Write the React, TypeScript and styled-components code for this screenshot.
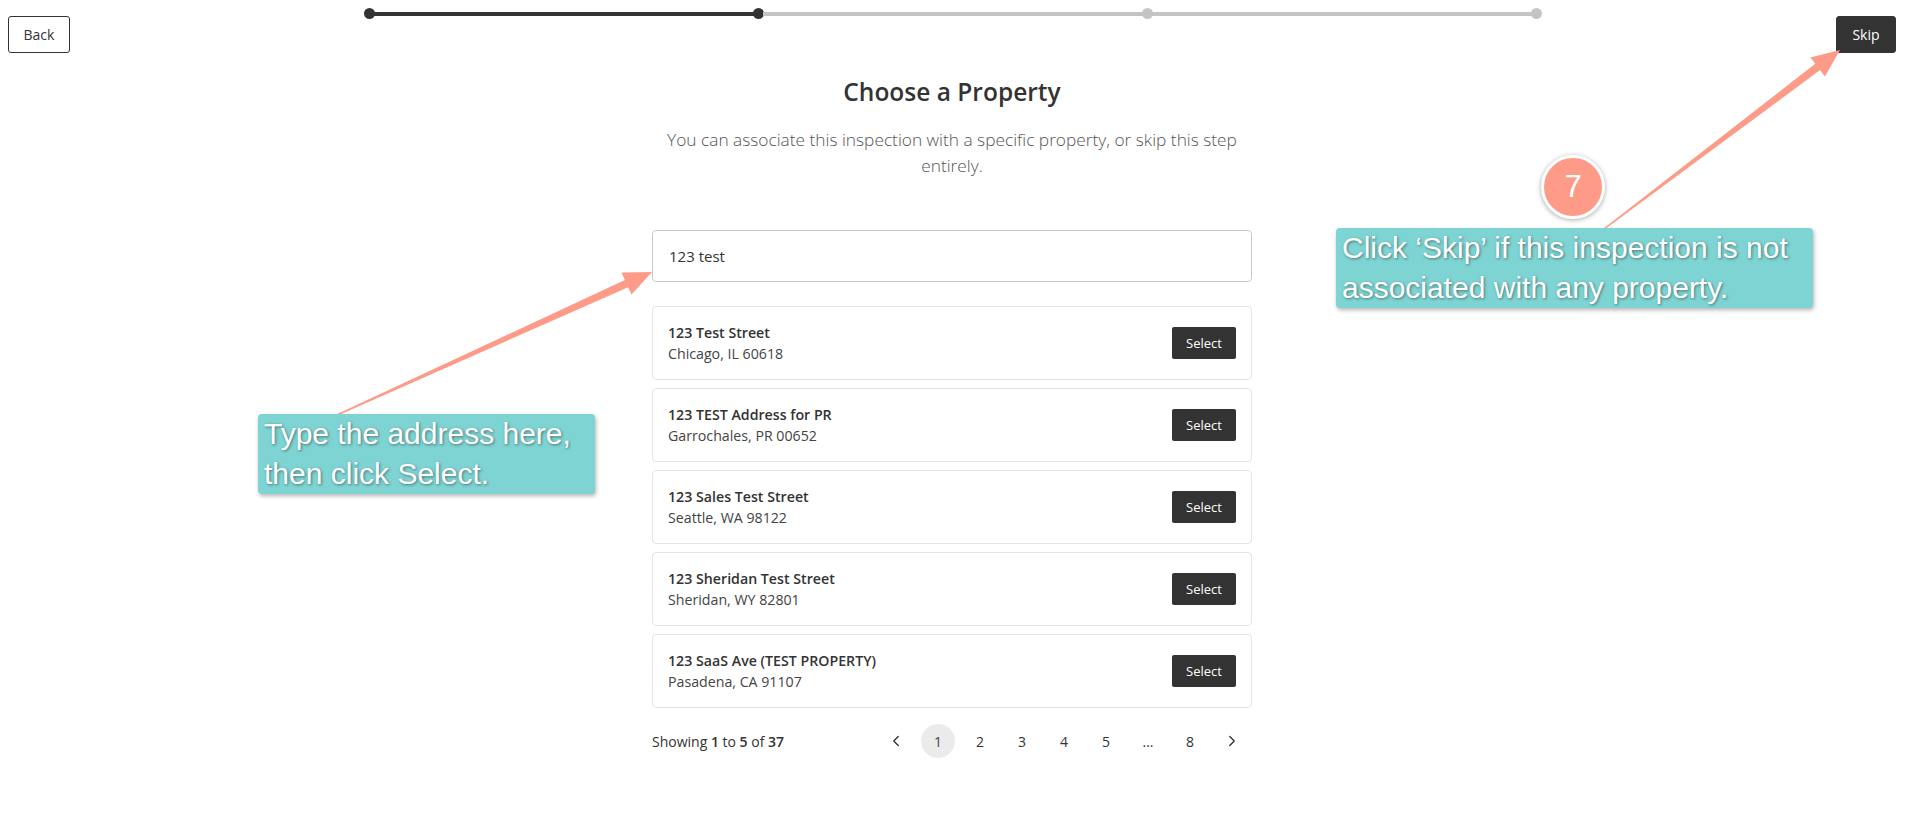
import React from "react";
import styled, { createGlobalStyle } from "styled-components";
import { ChevronLeft, ChevronRight } from "lucide-react";

const UI_FONT = `"Segoe UI", "Open Sans", "Noto Sans", sans-serif`;
const NOTE_FONT = `"Liberation Sans", Arial, sans-serif`;
const SALMON = "#fe9b88";
const TEAL = "#7ed4d3";

const GlobalStyle = createGlobalStyle`
  html, body { margin: 0; padding: 0; background: #fff; }
  body { font-family: ${UI_FONT}; color: #333; }
  * { box-sizing: border-box; }
`;

const Page = styled.div`
  position: relative;
  width: 1911px;
  min-height: 830px;
  padding: 0 15px 0 8px;
  overflow: hidden;
`;

const Header = styled.header`
  display: flex;
  justify-content: space-between;
  align-items: flex-start;
`;

const BaseButton = styled.button`
  font-family: ${UI_FONT};
  font-size: 14px;
  height: 37px;
  margin-top: 16px;
  border-radius: 3px;
  cursor: pointer;
  padding: 0;
`;

const OutlineButton = styled(BaseButton)`
  width: 62px;
  background: #fff;
  color: #333;
  border: 1px solid #333;
`;

const DarkButton = styled(BaseButton)`
  width: 60px;
  background: #333;
  color: #fff;
  border: 1px solid #333;
`;

const Stepper = styled.div`
  width: 1179px;
  height: 27px;
  display: flex;
  align-items: center;
`;

const StepDot = styled.span<{ $done: boolean }>`
  width: 11px;
  height: 11px;
  border-radius: 50%;
  flex: none;
  background: ${(p) => (p.$done ? "#333" : "#c4c4c4")};
`;

const StepLine = styled.span<{ $done: boolean }>`
  flex: 1;
  height: 4px;
  margin: 0 -1px;
  background: ${(p) => (p.$done ? "#333" : "#c4c4c4")};
`;

const Main = styled.main`
  width: 600px;
  margin: 0 auto;
  display: flex;
  flex-direction: column;
`;

const Title = styled.h1`
  margin: 24px 0 0;
  text-align: center;
  font-size: 24.5px;
  line-height: 30px;
  font-weight: 600;
  color: #333;
`;

const Subtitle = styled.p`
  margin: 20px 0 0;
  text-align: center;
  font-size: 17.3px;
  line-height: 26px;
  font-weight: 300;
  color: #555;
`;

const SearchInput = styled.input`
  margin-top: 51px;
  width: 100%;
  height: 52px;
  border: 1px solid #c8c8c8;
  border-radius: 4px;
  padding: 0 16px;
  font-family: ${UI_FONT};
  font-size: 15px;
  color: #333;
  outline: none;
`;

const ResultList = styled.ul`
  list-style: none;
  margin: 24px 0 0;
  padding: 0;
  display: flex;
  flex-direction: column;
  gap: 8px;
`;

const ResultCard = styled.li`
  height: 74px;
  border: 1px solid #e4e4e4;
  border-radius: 4px;
  padding: 0 15px 0 15px;
  display: flex;
  align-items: center;
  justify-content: space-between;
`;

const Address = styled.div`
  display: flex;
  flex-direction: column;
  font-size: 14.2px;
  line-height: 21px;
`;

const Street = styled.span`
  font-weight: 600;
  color: #333;
`;

const City = styled.span`
  color: #444;
`;

const SelectButton = styled.button`
  width: 64px;
  height: 32px;
  border: none;
  border-radius: 2px;
  background: #333;
  color: #fff;
  font-family: ${UI_FONT};
  font-size: 13px;
  cursor: pointer;
`;

const Pagination = styled.nav`
  margin-top: 16px;
  height: 34px;
  display: flex;
  align-items: center;
  justify-content: space-between;
  font-size: 14px;
  color: #333;
`;

const Summary = styled.span`
  b { font-weight: 600; }
`;

const Pages = styled.div`
  display: flex;
  align-items: center;
  gap: 8px;
  margin-right: 3px;
`;

const PageItem = styled.span<{ $active?: boolean }>`
  width: 34px;
  height: 34px;
  border-radius: 50%;
  display: flex;
  align-items: center;
  justify-content: center;
  background: ${(p) => (p.$active ? "#ebebeb" : "transparent")};
  color: ${(p) => (p.$active ? "#444" : "#333")};
`;

/* ---------- annotation overlay ---------- */

const ArrowLayer = styled.svg`
  position: absolute;
  left: 0;
  top: 0;
  pointer-events: none;
`;

const Callout = styled.div<{ $x: number; $y: number; $w: number }>`
  position: absolute;
  left: ${(p) => p.$x}px;
  top: ${(p) => p.$y}px;
  width: ${(p) => p.$w}px;
  height: 80px;
  padding: 0 6px 0 6px;
  background: ${TEAL};
  border-radius: 4px;
  box-shadow: 1px 2px 4px rgba(0, 0, 0, 0.3);
  color: #fff;
  font-family: ${NOTE_FONT};
  font-size: 30px;
  line-height: 40px;
  text-shadow: 1px 1px 3px rgba(0, 0, 0, 0.45);
  white-space: nowrap;
`;

const StepBadge = styled.div`
  position: absolute;
  left: 1541px;
  top: 155px;
  width: 64px;
  height: 64px;
  border-radius: 50%;
  border: 3px solid #fff;
  background: ${SALMON};
  box-shadow: 0 1px 5px rgba(0, 0, 0, 0.35);
  display: flex;
  align-items: center;
  justify-content: center;
  color: #fff;
  font-family: ${NOTE_FONT};
  font-size: 31px;
`;

type Pt = [number, number];

function arrowPoints(tail: Pt, tip: Pt): string {
  const dx = tip[0] - tail[0];
  const dy = tip[1] - tail[1];
  const len = Math.hypot(dx, dy);
  const ux = dx / len;
  const uy = dy / len;
  const nx = -uy;
  const ny = ux;
  const headLen = 28;
  const neck: Pt = [tip[0] - ux * headLen, tip[1] - uy * headLen];
  const pts: Pt[] = [
    [tail[0] + nx * 0.8, tail[1] + ny * 0.8],
    [neck[0] + nx * 4, neck[1] + ny * 4],
    [neck[0] + nx * 12, neck[1] + ny * 12],
    tip,
    [neck[0] - nx * 12, neck[1] - ny * 12],
    [neck[0] - nx * 4, neck[1] - ny * 4],
    [tail[0] - nx * 0.8, tail[1] - ny * 0.8],
  ];
  return pts.map((p) => `${p[0].toFixed(1)},${p[1].toFixed(1)}`).join(" ");
}

const results = [
  { street: "123 Test Street", city: "Chicago, IL 60618" },
  { street: "123 TEST Address for PR", city: "Garrochales, PR 00652" },
  { street: "123 Sales Test Street", city: "Seattle, WA 98122" },
  { street: "123 Sheridan Test Street", city: "Sheridan, WY 82801" },
  { street: "123 SaaS Ave (TEST PROPERTY)", city: "Pasadena, CA 91107" },
];

const pages = ["1", "2", "3", "4", "5", "...", "8"];

export default function App() {
  return (
    <>
      <GlobalStyle />
      <Page>
        <Header>
          <OutlineButton>Back</OutlineButton>
          <Stepper>
            <StepDot $done />
            <StepLine $done />
            <StepDot $done />
            <StepLine $done={false} />
            <StepDot $done={false} />
            <StepLine $done={false} />
            <StepDot $done={false} />
          </Stepper>
          <DarkButton>Skip</DarkButton>
        </Header>

        <Main>
          <Title>Choose a Property</Title>
          <Subtitle>
            You can associate this inspection with a specific property, or skip this step entirely.
          </Subtitle>
          <SearchInput value="123 test" readOnly />
          <ResultList>
            {results.map((r) => (
              <ResultCard key={r.street}>
                <Address>
                  <Street>{r.street}</Street>
                  <City>{r.city}</City>
                </Address>
                <SelectButton>Select</SelectButton>
              </ResultCard>
            ))}
          </ResultList>
          <Pagination>
            <Summary>
              Showing <b>1</b> to <b>5</b> of <b>37</b>
            </Summary>
            <Pages>
              <PageItem>
                <ChevronLeft size={18} strokeWidth={1.8} />
              </PageItem>
              {pages.map((p) => (
                <PageItem key={p} $active={p === "1"}>
                  {p}
                </PageItem>
              ))}
              <PageItem>
                <ChevronRight size={18} strokeWidth={1.8} />
              </PageItem>
            </Pages>
          </Pagination>
        </Main>

        <ArrowLayer width={1911} height={830} viewBox="0 0 1911 830">
          <polygon points={arrowPoints([337, 415], [652, 272])} fill={SALMON} />
          <polygon points={arrowPoints([1604, 229], [1840, 50])} fill={SALMON} />
        </ArrowLayer>

        <StepBadge>7</StepBadge>
        <Callout $x={258} $y={414} $w={337}>
          Type the address here,
          <br />
          then click Select.
        </Callout>
        <Callout $x={1336} $y={228} $w={477}>
          Click ‘Skip’ if this inspection is not
          <br />
          associated with any property.
        </Callout>
      </Page>
    </>
  );
}
